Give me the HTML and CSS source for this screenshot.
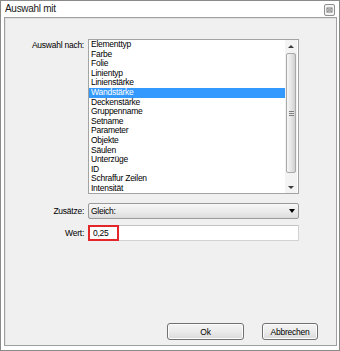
FILE: index.html
```html
<!DOCTYPE html>
<html lang="de">
<head>
<meta charset="UTF-8">
<title>Auswahl mit</title>
<link rel="stylesheet" href="styles.css">
</head>
<body>
<div class="dialog">
    <div class="titlebar">
        <span class="title">Auswahl mit</span>
        <span class="close">
            <svg width="11" height="12" viewBox="0 0 11 12">
                <rect x="0.5" y="0.5" width="10" height="11" rx="1.5" fill="#f4f4f4" stroke="#8f8f8f"/>
                <rect x="3" y="4" width="5" height="4" fill="none" stroke="#7a7a7a"/>
                <path d="M3.5 4.5 L7.5 7.5 M7.5 4.5 L3.5 7.5" stroke="#7a7a7a" stroke-width="0.8"/>
            </svg>
        </span>
    </div>

    <div class="panel">
        <div class="form">
            <label class="lbl lbl-top">Auswahl nach:</label>
            <div class="listbox">
                <ul class="items">
                    <li>Elementtyp</li>
                    <li>Farbe</li>
                    <li>Folie</li>
                    <li>Linientyp</li>
                    <li>Linienstärke</li>
                    <li class="selected">Wandstärke</li>
                    <li>Deckenstärke</li>
                    <li>Gruppenname</li>
                    <li>Setname</li>
                    <li>Parameter</li>
                    <li>Objekte</li>
                    <li>Säulen</li>
                    <li>Unterzüge</li>
                    <li>ID</li>
                    <li>Schraffur Zeilen</li>
                    <li>Intensität</li>
                </ul>
                <div class="scrollbar">
                    <div class="sb-btn"><span class="tri-up"></span></div>
                    <div class="thumb"><span class="grip"></span></div>
                    <div class="track"></div>
                    <div class="sb-btn"><span class="tri-down"></span></div>
                </div>
            </div>

            <label class="lbl">Zusätze:</label>
            <div class="combo">
                <span class="combo-text">Gleich:</span>
                <span class="combo-arrow"></span>
            </div>

            <label class="lbl">Wert:</label>
            <div class="textbox">
                <span class="mark">0,25</span>
            </div>
        </div>

        <div class="buttons">
            <button class="btn btn-ok">Ok</button>
            <button class="btn btn-cancel">Abbrechen</button>
        </div>
    </div>
</div>
</body>
</html>
```

FILE: styles.css
```css
body {
    margin: 0;
    padding: 0;
    background: #fff;
    font-family: "Liberation Sans", Arial, sans-serif;
    font-size: 8.5px;
    letter-spacing: -0.25px;
    color: #000;
}
.dialog {
    width: 340px;
    height: 351px;
    box-sizing: border-box;
    border: 1px solid #8a8a8a;
    background: #fff;
    display: flex;
    flex-direction: column;
}
.titlebar {
    height: 16px;
    display: flex;
    align-items: center;
    justify-content: space-between;
    padding: 0 4px 0 4px;
}
.title {
    font-size: 10px;
    letter-spacing: -0.3px;
    color: #1a1a1a;
    line-height: 16px;
}
.close {
    display: flex;
    margin-top: 2px;
}
.panel {
    height: 329px;
    margin: 0 2px 0 3px;
    box-sizing: border-box;
    border: 1px solid #a0a0a0;
    box-shadow: inset 1px 1px 0 #e2e2e2;
    background: #f0f0f0;
    display: flex;
    flex-direction: column;
    padding: 21px 0 5px 0;
}
.form {
    display: grid;
    grid-template-columns: 79px 211px;
    grid-template-rows: 155px 25px 22px;
    column-gap: 4px;
}
.lbl {
    text-align: right;
    align-self: end;
    height: 16px;
    line-height: 16px;
}
.lbl-top {
    align-self: start;
    height: auto;
    line-height: 12px;
}
.listbox {
    box-sizing: border-box;
    border: 1px solid #a3a3a3;
    background: #fff;
    display: flex;
    overflow: hidden;
}
.items {
    list-style: none;
    margin: 0;
    padding: 0;
    flex: 1;
    overflow: hidden;
}
.items li {
    height: 9.6px;
    line-height: 9.6px;
    padding-left: 2px;
    white-space: nowrap;
}
.items li.selected {
    background: #3399ff;
    color: #fff;
}
.scrollbar {
    width: 12px;
    margin-right: 1px;
    background: #f3f3f3;
    display: flex;
    flex-direction: column;
}
.sb-btn {
    height: 12px;
    display: flex;
    align-items: center;
    justify-content: center;
}
.tri-up, .tri-down {
    width: 0;
    height: 0;
    border-left: 3px solid transparent;
    border-right: 3px solid transparent;
}
.tri-up {
    border-bottom: 3px solid #3c3c3c;
}
.tri-down {
    border-top: 3px solid #3c3c3c;
}
.thumb {
    height: 120px;
    margin: 1px 1px 0 1px;
    box-sizing: border-box;
    border: 1px solid #a9a9a9;
    border-radius: 2px;
    background: linear-gradient(to right, #f6f6f6, #e4e4e4 55%, #d0d0d0);
    display: flex;
    align-items: center;
    justify-content: center;
}
.grip {
    width: 5px;
    height: 5px;
    background: repeating-linear-gradient(#7d7d7d 0 1px, #e8e8e8 1px 2px);
}
.track {
    flex: 1;
}
.combo {
    align-self: end;
    height: 16px;
    box-sizing: border-box;
    border: 1px solid #9a9a9a;
    border-radius: 2px;
    background: linear-gradient(#f7f7f7, #ececec 50%, #dcdcdc);
    display: flex;
    align-items: center;
    justify-content: space-between;
    padding: 0 3px 0 2px;
}
.combo-arrow {
    width: 0;
    height: 0;
    border-left: 3.5px solid transparent;
    border-right: 3.5px solid transparent;
    border-top: 4px solid #000;
}
.textbox {
    align-self: end;
    height: 16px;
    box-sizing: border-box;
    border: 1px solid #d2d2d2;
    border-top-color: #c4c4c4;
    background: #fff;
    display: flex;
}
.mark {
    margin: -1px 0 -1px -1px;
    width: 31px;
    box-sizing: border-box;
    border: 2px solid #e3262a;
    padding-left: 3px;
    line-height: 13px;
}
.buttons {
    margin-top: auto;
    display: flex;
    justify-content: flex-end;
    gap: 18px;
    padding-right: 18px;
}
.btn {
    height: 17px;
    box-sizing: border-box;
    border: 1px solid #707070;
    border-radius: 3px;
    background: linear-gradient(#f4f4f4, #ebebeb 50%, #dadada);
    font-family: "Liberation Sans", Arial, sans-serif;
    font-size: 8.5px;
    letter-spacing: -0.25px;
    color: #000;
    padding: 0;
    box-shadow: inset 0 0 0 1px #fcfcfc;
}
.btn-ok {
    width: 77px;
}
.btn-cancel {
    width: 56px;
}
```
